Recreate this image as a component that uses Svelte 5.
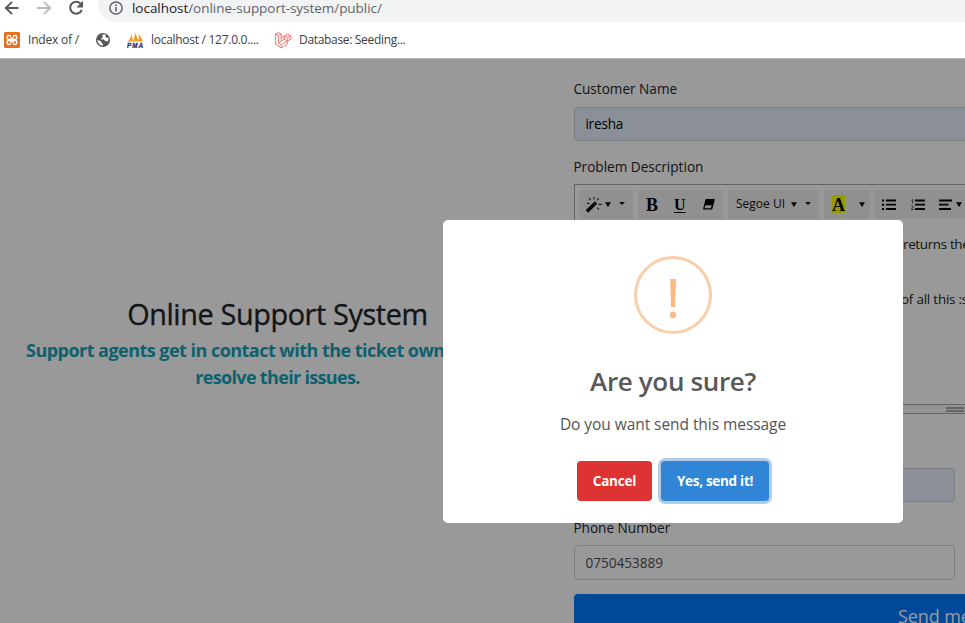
<script>
  let customer = $state('iresha');
  let phone = $state('0750453889');
</script>

{#snippet caret()}
  <svg class="caret" width="6" height="5" viewBox="0 0 6 5"><path d="M0 .3h6L3 5z" fill="#000" /></svg>
{/snippet}
{#snippet drop()}
  <svg class="caret drop" width="6" height="3" viewBox="0 0 6 3"><path d="M0 0h6L3 3z" fill="#111" /></svg>
{/snippet}

<div class="window">
  <header>
    <div class="nav">
      <svg class="back" width="16" height="16" viewBox="0 0 16 16" fill="none" stroke="#55595e" stroke-width="1.9"><path d="M14.5 8H2.5M8 1.8 1.8 8 8 14.2" /></svg>
      <svg class="forward" width="16" height="16" viewBox="0 0 16 16" fill="none" stroke="#babcbe" stroke-width="1.9"><path d="M1 8h12.5M8 1.8 14.2 8 8 14.2" /></svg>
      <svg class="reload" width="16" height="16" viewBox="0 0 16 16"><path d="M12.6 3.6A6 6 0 1 0 13.8 9.8" fill="none" stroke="#55595e" stroke-width="2" /><path d="M15 0.8v6.6H8.4z" fill="#55595e" /></svg>
      <div class="address">
        <svg width="14" height="14" viewBox="0 0 14 14"><circle cx="7" cy="7" r="6.1" fill="none" stroke="#5f6368" stroke-width="1.5" /><path d="M6.2 6h1.6v4.6H6.2zM6.2 3.3h1.6v1.6H6.2z" fill="#5f6368" /></svg>
        <span class="url"><b>localhost</b>/online-support-system/public/</span>
      </div>
    </div>
    <div class="bookmarks">
      <svg width="16" height="16" viewBox="0 0 16 16"><rect width="16" height="16" rx="1.2" fill="#e8701c" /><rect x="3.2" y="3.6" width="4" height="3.9" rx="1.7" fill="none" stroke="#fff" stroke-width="1.5" /><rect x="8.8" y="3.6" width="4" height="3.9" rx="1.7" fill="none" stroke="#fff" stroke-width="1.5" /><rect x="3.2" y="8.5" width="4" height="3.9" rx="1.7" fill="none" stroke="#fff" stroke-width="1.5" /><rect x="8.8" y="8.5" width="4" height="3.9" rx="1.7" fill="none" stroke="#fff" stroke-width="1.5" /><path d="M6 8h4" stroke="#fff" stroke-width="2" /><path d="M7.2 3h1.6v2.2H7.2zM7.2 10.8h1.6V13H7.2z" fill="#e8701c" /></svg>
      <span class="b1">Index of /</span>
      <svg class="globe" width="14" height="14" viewBox="0 0 14 14"><circle cx="7" cy="7" r="7" fill="#54585d" /><path d="M7.2 1.2 6 2.9l1 1.2L5.7 5.3 4.5 6.2l3.2.3L9.2 8l1 .2 1.8 0A5.5 5.5 0 0 0 12.5 5L10.3 4.6 9.2 3l1-1.2zM1.3 7.2l2.2.2 2.1 1.7 0 1.1L7 11.1v1.5A5.6 5.6 0 0 1 1.3 7.2z" fill="#fff" /></svg>
      <svg class="pma" width="18" height="16" viewBox="0 0 18 16"><path d="M1 10C4 8 5.4 4 5.5 1.5L7 9.2zM6.8 9.2C8.5 6 9 3 8.7 0l4 9.1zM12.3 9C13 6 13 4 12.3 2c2.4 2 3.5 4.7 4.7 7.5z" fill="#f69a26" /><path d="M1.5 10Q8 8.6 16.5 10" fill="none" stroke="#ccc" stroke-width=".8" /><text x="1" y="15.5" font-family="Liberation Sans, sans-serif" font-size="6.3" font-weight="700" font-style="italic" textLength="16" fill="#37366e" stroke="#37366e" stroke-width=".3">PMA</text></svg>
      <span class="b2">localhost / 127.0.0....</span>
      <svg class="laravel" width="17" height="17" viewBox="0 0 17 17" fill="none" stroke="#fb706b" stroke-width=".95" stroke-linejoin="round"><path d="M.6 2 3.4.6 6.2 2v7L9 7.4V4.3l-2.8 1.6M.6 2v10.4l5.8 3.5 5.8-3.5V9.2l3.7-2.1V3.8l-3.1-1.7-3.3 1.7v3.7l3.2 1.7M.6 2l2.8 1.6L6.2 2M3.4 3.6v7.2l3 1.8 5.8-3.4M3.4 10.8l2.8-1.8M6.4 12.6v3.3M9.7 3.8l3.1 1.7 3.1-1.7M12.8 5.5v3.4" /></svg>
      <span class="b3">Database: Seeding...</span>
    </div>
  </header>

  <main>
    <section class="intro">
      <h1>Online Support System</h1>
      <p><span class="l1">Support agents get in contact with the ticket owners and</span><span class="l2">resolve their issues.</span></p>
    </section>

    <form onsubmit={(e) => e.preventDefault()}>
      <label for="name" class="name-label">Customer Name</label>
      <input id="name" class="filled wide" bind:value={customer} />
      <div class="label desc-label">Problem Description</div>
      <div class="editor">
        <div class="toolbar">
          <div class="group g1">
            <svg width="19" height="16" viewBox="0 0 19 16"><path d="M1 14.5 10 5.5" stroke="#000" stroke-width="3.4" /><path d="m8.2 6.1 1.2 1.2" stroke="#999" stroke-width=".8" /><path d="M8 0v2.4M3 1.5l1.7 1.7M12.8 1.5 11.2 3.2M1 6.3h2.6M12.5 7.3h3.2M11.3 10.6l1.7 1.7" stroke="#333" stroke-width="1.2" /></svg>
            {@render caret()}<i class="gap"></i>{@render drop()}
          </div>
          <div class="group g2">
            <span class="serif">B</span><span class="serif under">U</span>
            <svg width="12" height="11" viewBox="0 0 12 11"><path d="M3 0h8.3q.7 0 .5.7L9.3 10q-.2.6-.9.6H.5q-.7 0-.4-.7L2.4.6Q2.5 0 3 0z" fill="#000" /><path d="M2.3 6.2h6.4l-.9 3H1.5z" fill="#e9e9e9" /></svg>
          </div>
          <div class="group g3"><span>Segoe UI</span>{@render caret()}<i class="gap"></i>{@render drop()}</div>
          <div class="group g4"><span class="serif mark">A</span>{@render caret()}</div>
          <div class="group g5">
            <svg width="14" height="12" viewBox="0 0 14 12"><path d="M4 1.5h10M4 5.7h10M4 10h10" stroke="#000" stroke-width="1.8" /><path d="M0 .5h2.2v2H0zM0 4.8h2.2v2H0zM0 9h2.2v2H0z" /></svg>
            <svg width="14" height="12" viewBox="0 0 14 12"><path d="M4 1.5h10M4 5.7h10M4 10h10" stroke="#000" stroke-width="1.8" /><path d="M.3 1.2 1.6.5v4M.2 7.3q2-1.2 2 .3 0 .8-2 3h2.5" fill="none" stroke="#222" stroke-width=".8" /></svg>
            <svg width="13" height="12" viewBox="0 0 13 12"><path d="M0 1.5h13M0 5.7h9.5M0 10h12" stroke="#000" stroke-width="1.8" /></svg>
            {@render caret()}
          </div>
        </div>
        <div class="content"><p>returns the</p><p class="second">of all this :s</p></div>
        <div class="resize"><i></i><i></i></div>
      </div>
      <input class="filled email" aria-label="Email" />
      <label for="phone" class="phone-label">Phone Number</label>
      <input id="phone" class="phone" bind:value={phone} />
      <button class="submit"><span>Send message</span></button>
    </form>

    <div class="overlay"></div>
    <div class="modal" role="dialog">
      <svg class="warn" width="78" height="78" viewBox="0 0 78 78"><circle cx="39" cy="39" r="37.5" fill="none" stroke="#facea8" stroke-width="3" /><path d="M36.2 23h5.8l-.9 28h-4z" fill="#f8bb86" /><circle cx="39.1" cy="59" r="3.2" fill="#f8bb86" /></svg>
      <h2>Are you sure?</h2>
      <p>Do you want send this message</p>
      <div class="actions">
        <button class="cancel"><span>Cancel</span></button>
        <button class="confirm"><span>Yes, send it!</span></button>
      </div>
    </div>
  </main>
</div>

<style>
  :global(body) { margin: 0; overflow: hidden; }
  .window { width: 965px; height: 623px; overflow: hidden; display: flex; flex-direction: column; font-family: "Open Sans", "Noto Sans", sans-serif; background: #fff; color: #212529; }
  .window * { box-sizing: border-box; }
  svg { display: block; flex: none; }
  span, label, h1, h2, p { white-space: nowrap; }
  button, input { font-family: inherit; margin: 0; outline: none; }
  header { height: 59px; flex: none; border-bottom: 1px solid #b5b5b5; }
  .nav { height: 22px; display: flex; }
  .back { margin-left: 4px; }
  .forward { margin-left: 16px; }
  .reload { margin-left: 16px; }
  .address { margin-left: 14px; width: 900px; height: 34px; margin-top: -12px; flex: none; border-radius: 17px; background: #f1f3f4; display: flex; align-items: center; padding: 6px 0 0 11px; gap: 9px; font-size: 13.5px; color: #5f6368; }
  .address b { font-weight: 400; color: #202124; }
  .url { letter-spacing: -.04px; }
  .bookmarks { height: 36px; display: flex; align-items: center; padding-left: 4px; font-size: 12px; color: #3c4043; }
  .bookmarks span { position: relative; top: -.5px; }
  .b1 { margin-left: 8px; width: 68px; letter-spacing: -.2px; }
  .pma { margin-left: 16px; }
  .b2 { margin-left: 7px; width: 124px; letter-spacing: -.28px; }
  .b3 { margin-left: 7px; letter-spacing: -.32px; }

  main { position: relative; height: 564px; display: flex; flex: none; }
  .intro { width: 555px; flex: none; padding-top: 237px; text-align: center; }
  h1 { margin: 0; font-size: 28.8px; line-height: 36px; font-weight: 500; letter-spacing: -.37px; -webkit-text-stroke: .35px #212529; }
  .intro p { margin: 5px 0 0; font-size: 18px; line-height: 27px; font-weight: 700; color: #17a2b8; display: flex; flex-direction: column; align-items: center; }
  .l1 { letter-spacing: -.53px; align-self: flex-start; margin-left: 26px; }
  .l2 { letter-spacing: -.67px; }
  form { width: 500px; flex: none; padding: 20px 0 0 19px; display: flex; flex-direction: column; align-items: flex-start; }
  label, .label { font-size: 13.6px; line-height: 20px; margin-left: -.6px; }
  input { height: 35px; flex: none; border: 1px solid #ced4da; border-radius: 4px; padding: 0 11px 0 10.4px; font-size: 13.6px; color: #495057; background: #fff; width: 381px; }
  .filled { background: #e8f0fe; color: #000; height: 34px; }
  .wide { width: 481px; margin-top: 8px; padding-bottom: 1px; letter-spacing: -.2px; }
  .desc-label { margin-top: 16px; }
  .editor { margin-top: 7px; width: 481px; height: 230px; border: 1px solid #a9a9a9; display: flex; flex-direction: column; }
  .toolbar { height: 39px; padding: 5px 4px; display: flex; }
  .group { height: 29px; border-radius: 3px; background: #f0f0f0; display: flex; align-items: center; flex: none; font-size: 12px; color: #111; }
  .gap { width: 9px; }
  .drop { margin-left: -.5px; margin-top: -2px; }
  .g1 { width: 54px; padding-left: 6.5px; }
  .g2 { width: 85px; margin-left: 5px; padding-left: 8px; }
  .g3 { width: 91px; margin-left: 5px; padding-left: 8px; }
  .g3 span { width: 54.5px; letter-spacing: 0; position: relative; top: -1px; }
  .g4 { width: 46px; margin-left: 5px; padding-left: 8px; }
  .g5 { width: 100px; margin-left: 4px; padding-left: 8px; gap: 14.5px; }
  .g5 .caret { margin-left: -11px; }
  .serif { font-family: "Liberation Serif", serif; font-weight: 700; font-size: 18px; line-height: 20px; color: #000; width: 28px; }
  .under { font-size: 16px; text-decoration: underline; text-underline-offset: 2px; width: 29px; }
  .mark { background: #ff0; width: 13px; height: 18px; line-height: 21px; text-align: center; margin-right: 14px; margin-top: -2px; }
  .content { height: 181px; padding: 10px 0 0 328px; font-size: 13.4px; line-height: 20px; }
  .content p { margin: 0 0 35px; letter-spacing: -.33px; }
  .content .second { margin-left: -2px; letter-spacing: -.2px; }
  .resize { height: 9px; flex: none; border-top: 1px solid #a9a9a9; background: #f5f5f5; padding: 2px 0 0 371px; }
  .resize i { display: block; width: 18px; height: 2px; background: #a9a9a9; margin-bottom: 1px; }
  .email { margin-top: 54px; }
  .phone-label { margin-top: 16px; }
  .phone { margin-top: 7px; }
  .submit { margin-top: 14px; flex: none; width: 481px; height: 43px; border: 0; border-radius: 4px; background: #007bff; color: #fff; font-size: 18px; text-align: left; padding-left: 324px; }
  .submit span { letter-spacing: -.1px; }
  .overlay { position: absolute; inset: 0; background: rgba(0, 0, 0, .4); }
  .modal { position: absolute; left: 443px; top: 161px; width: 460px; height: 303px; border-radius: 5px; background: #fff; display: flex; flex-direction: column; align-items: center; padding-top: 36px; }
  h2 { margin: 27px 0 0; font-size: 26px; line-height: 40px; font-weight: 600; color: #595959; letter-spacing: -.35px; }
  .modal p { margin: 11px 0 0; font-size: 15.5px; line-height: 24px; color: #545454; letter-spacing: -.06px; }
  .actions { margin-top: 25px; display: flex; gap: 9px; }
  .actions button { height: 40px; border: 0; border-radius: 4px; color: #fff; font-size: 13.5px; font-weight: 700; padding: 0; }
  .cancel { width: 75px; background: #dd3333; letter-spacing: -.2px; }
  .confirm { width: 108px; background: #3085d6; letter-spacing: -.3px; box-shadow: 0 0 0 3px #b3cbe4; }
</style>
